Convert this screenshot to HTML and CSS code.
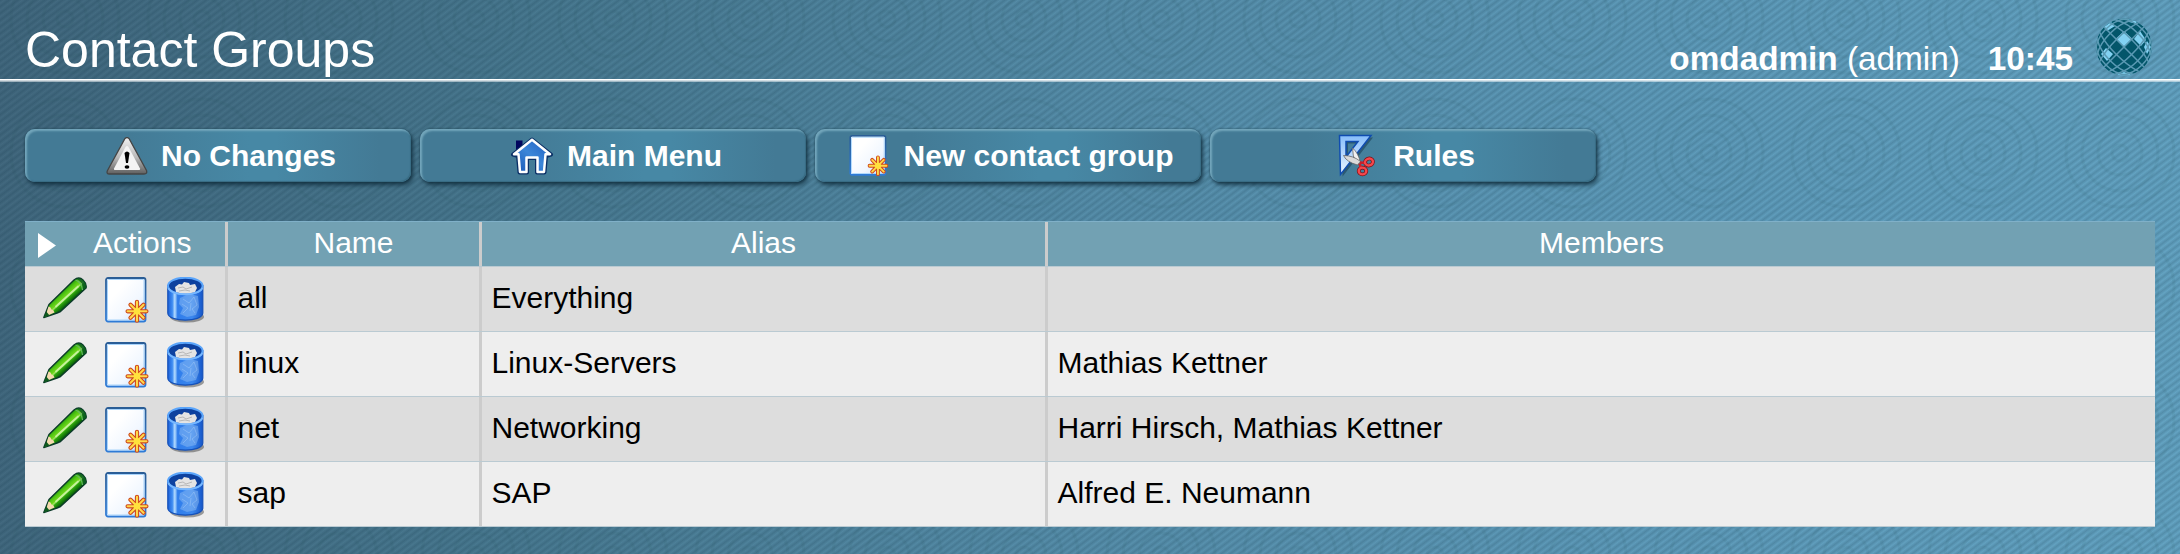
FILE: index.html
```
<!DOCTYPE html>
<html lang="en">
<head>
<meta charset="utf-8">
<title>Contact Groups</title>
<link rel="stylesheet" href="styles.css">
</head>
<body>
<svg class="defs" width="0" height="0" aria-hidden="true">
  <defs>
    <linearGradient id="sheet" x1="0" y1="0" x2="1" y2="1"><stop offset="0.3" stop-color="#fff"/><stop offset="0.65" stop-color="#f1f7ff"/><stop offset="1" stop-color="#c4dcf8"/></linearGradient>
    <linearGradient id="sheetEdge" x1="0" y1="0" x2="0" y2="1"><stop offset="0" stop-color="#2a5d96"/><stop offset="1" stop-color="#2f7bd6"/></linearGradient>
    <linearGradient id="green" gradientUnits="userSpaceOnUse" x1="16" y1="15" x2="26" y2="26"><stop offset="0" stop-color="#0f8f0a"/><stop offset="0.3" stop-color="#4fc412"/><stop offset="0.52" stop-color="#6fd61c"/><stop offset="0.6" stop-color="#a9e86a"/><stop offset="0.7" stop-color="#2fa80c"/><stop offset="1" stop-color="#065c08"/></linearGradient>
    <linearGradient id="can" x1="0" y1="0" x2="1" y2="0"><stop offset="0" stop-color="#1c5fd6"/><stop offset="0.13" stop-color="#3f8df2"/><stop offset="0.2" stop-color="#b5dcff"/><stop offset="0.28" stop-color="#2f7deb"/><stop offset="0.7" stop-color="#3c88ee"/><stop offset="1" stop-color="#1556c8"/></linearGradient>
    <linearGradient id="roof" x1="0" y1="1" x2="1" y2="0"><stop offset="0" stop-color="#1554b4"/><stop offset="0.5" stop-color="#3c86d8"/><stop offset="1" stop-color="#1e5cc0"/></linearGradient>
    <linearGradient id="steel" x1="0" y1="0" x2="0" y2="1"><stop offset="0" stop-color="#f2f2f2"/><stop offset="0.55" stop-color="#b9b9b9"/><stop offset="1" stop-color="#5f5f5f"/></linearGradient>
    <linearGradient id="ruler" x1="0" y1="0" x2="0" y2="1"><stop offset="0" stop-color="#86bdfb"/><stop offset="1" stop-color="#eef6ff"/></linearGradient>
    <clipPath id="ball"><ellipse rx="28" ry="28.5"/></clipPath>
    <pattern id="rings" width="137" height="134" patternUnits="userSpaceOnUse" x="0" y="86">
      <g fill="none" stroke="#1b4a4c" stroke-width="3"><circle cx="65" cy="67" r="8"/><circle cx="65" cy="67" r="22"/><circle cx="65" cy="67" r="38"/><circle cx="65" cy="67" r="54"/></g>
    </pattern>
    <symbol id="i-star" viewBox="0 0 24 24">
      <g stroke-linecap="round" fill="none"><path d="M12 2.600v18.800M2.600 12h18.800M5.500 5.500l13 13M18.500 5.500l-13 13" stroke="#cf4a1c" stroke-width="4.300"/><path d="M12 2.600v18.800M2.600 12h18.800M5.500 5.500l13 13M18.500 5.500l-13 13" stroke="#ffd94a" stroke-width="2.100"/></g><circle cx="12" cy="12" r="3.300" fill="#ffe23c"/>
    </symbol>
    <symbol id="i-new" viewBox="0 0 44 48">
      <rect x="1" y="1" width="39.500" height="43.500" rx="2" fill="url(#sheet)" stroke="url(#sheetEdge)" stroke-width="1.800"/>
      <rect x="2.500" y="2.500" width="36.500" height="40.500" rx="1" fill="none" stroke="#a9d4fb" stroke-width="1"/>
      <use href="#i-star" x="20" y="22.300" width="24" height="24"/>
    </symbol>
    <symbol id="i-pencil" viewBox="0 0 44 42">
      <path d="M.8 40.500 6 27.500 31 3Q36-1 40 3t3 8L17.500 34.500 14 36Z" fill="url(#green)" stroke="#0c3a2a" stroke-width="1.400" stroke-linejoin="round"/>
      <path d="M5.500 29.500Q8 30 8.500 32.500 11 33 11.500 35.500L2.500 39.500Z" fill="#f5d9b0"/>
      <path d="M.8 40.500 3.300 34.500 6.500 38.500Z" fill="#0d5a1c"/>
      <path d="M13 29.500 35 9.500" stroke="#c6f29c" stroke-width="1.800" stroke-linecap="round"/>
      <path d="M33.500 1.800Q36 0 40 3t3 8L40.500 13Q40 5 33.500 1.800Z" fill="#0b5a22" opacity=".85"/>
      <path d="M32.500 3Q38.500 5 39.500 13" stroke="#65b766" stroke-width="1.300" fill="none"/>
    </symbol>
    <symbol id="i-can" viewBox="0 0 38 46">
      <ellipse cx="20" cy="40" rx="17" ry="5.500" fill="#333" opacity=".45"/>
      <path d="M.8 8.500V36c0 9.500 35 9.500 35 0V8.500Z" fill="url(#can)" stroke="#1450b8" stroke-width="1.200"/>
      <path d="M13 21l9-4 9 2 1 11-3 8-9 2-7-3 3-6-4-4z" fill="#8bbcf4" opacity=".5"/>
      <path d="M16 22l6 4 5-6 3 8-5 4 3 4m-13-9 6 4-5 5m8-10-1 8" fill="none" stroke="#b9d9fb" stroke-width="1" opacity=".35"/>
      <ellipse cx="18.300" cy="9" rx="17.300" ry="8.300" fill="#0d419f" stroke="#5aa5fb" stroke-width="2"/>
      <path d="M8 10l4-3 3 .5L17 5l5 1 1 2 5-1 2 4-2 4Q18 18 9 15Z" fill="#e4e4e4"/>
      <path d="M11 11l5-1 3 2 6-2m-13 4 6-1 5 1" fill="none" stroke="#b8b8b8"/>
      <path d="M1.500 11C4 19.500 33 19.500 35.200 11" fill="none" stroke="#78b8ff" stroke-width="1.700"/>
    </symbol>
    <symbol id="i-warn" viewBox="0 0 42 38">
      <path d="M19 1.500q2-2 4 0l17.500 32q1 3.500-2.500 3.500H3.500Q0 37 1.500 33.500Z" fill="url(#steel)" stroke="#454545" stroke-width="1.300"/>
      <path d="M19.500 10q1.500-2 3 0L34 31.500q.5 1.500-1 1.500H9q-1.500 0-1-1.500Z" fill="#f4f4f4"/>
      <path d="M18.500 16q2.500-3 5 0l-1.500 10h-2z" fill="#000"/><ellipse cx="21" cy="30" rx="2.400" ry="1.800" fill="#000"/>
    </symbol>
    <symbol id="i-home" viewBox="0 0 44 38">
      <path d="M6 3.500h6.500V12L6 17Z" fill="#02065e"/>
      <path d="M22 2.500 41 17.500l-5 1.500-1.500 16.500H27V21H17v14.500H9.500L8 19 3 17.500Z" fill="#0a2f66" stroke="#0a2f66" stroke-width="4" stroke-linejoin="round"/>
      <path d="M22 2.800 40 17.300H35.500L34 35H27.500V20.500H16.500V35H10L8.500 17.300H4Z" fill="url(#roof)" stroke="#fff" stroke-width="2.500" stroke-linejoin="round"/>
    </symbol>
    <symbol id="i-rules" viewBox="0 0 38 44">
      <path d="M2.600 2.600H34L3.600 41.500Z M9 8.600V24L21 8.600Z" transform="translate(1 1)" fill="#12344c" opacity=".5" fill-rule="evenodd"/>
      <path d="M1.500 1.500H33L2.500 40.500Z M8 7.500V23L20 7.500Z" fill="url(#ruler)" fill-rule="evenodd" stroke="#0f4cb0" stroke-width="1.500"/>
      <path d="M14.500 14q6 5 8 15l-3.500 1q-5-8-4.500-16Z" fill="#f1f1f1" stroke="#666" stroke-width=".8"/>
      <path d="M5.500 21.500q10 0 17 6l-3 3.500q-11-3-14-9.500Z" fill="#dadada" stroke="#666" stroke-width=".8"/>
      <ellipse cx="31" cy="28" rx="4" ry="3.400" transform="rotate(-20 31 28)" fill="none" stroke="#7c0f16" stroke-width="3.800"/><ellipse cx="24.500" cy="37" rx="3.800" ry="3.400" fill="none" stroke="#7c0f16" stroke-width="3.800"/>
      <path d="m22 28.500 5.500.5M21.500 29.500l1.500 4.500" stroke="#c8202a" stroke-width="2.500"/>
      <ellipse cx="31" cy="28" rx="4" ry="3.400" transform="rotate(-20 31 28)" fill="none" stroke="#f4484c" stroke-width="2.400"/><ellipse cx="24.500" cy="37" rx="3.800" ry="3.400" fill="none" stroke="#f4484c" stroke-width="2.400"/>
    </symbol>
  </defs>
</svg>
<svg class="rings" aria-hidden="true"><rect width="100%" height="100%" fill="url(#rings)"/></svg>
<header class="top">
  <h1 class="title">Contact Groups</h1>
  <div class="session">
    <span class="user"><b>omdadmin</b> (admin)</span>
    <b class="clock">10:45</b>
    <svg class="globe" viewBox="-29 -29 58 59" aria-hidden="true">
      <g clip-path="url(#ball)">
        <ellipse rx="28" ry="28.500" fill="#03566a"/>
        <path fill="#82d1f2" d="M0-16 8-8.500 0-.5-8-8.500ZM16-16 22-7 17-1 10-8ZM23-6 27 0 23 7 20 0ZM-18 1-11 7-17 14-23 7ZM-20-20-13-25-9-21-17-16ZM3-28 12-26 13-23 5-25ZM-8 28 0 25 8 28 0 32Z"/>
        <g class="mesh" transform="rotate(45)">
          <path d="M0-30V30M-30 0H30"/>
          <ellipse rx="10.700" ry="36"/><ellipse rx="19.500" ry="34"/><ellipse rx="25.500" ry="31"/>
          <ellipse rx="36" ry="10.700"/><ellipse rx="34" ry="19.500"/><ellipse rx="31" ry="25.500"/>
        </g>
      </g>
    </svg>
  </div>
</header>
<nav class="buttons">
  <a class="button"><svg class="warn"><use href="#i-warn"/></svg>No Changes</a>
  <a class="button"><svg class="home"><use href="#i-home"/></svg>Main Menu</a>
  <a class="button"><svg class="new"><use href="#i-new"/></svg>New contact group</a>
  <a class="button"><svg class="rules"><use href="#i-rules"/></svg>Rules</a>
</nav>
<main class="table">
  <div class="row head"><div class="actions-head"><svg class="arrow" viewBox="0 0 18 25"><path d="M0 0 18 12.500 0 25Z" fill="#fff"/></svg><span>Actions</span></div><div>Name</div><div>Alias</div><div>Members</div></div>
  <div class="row odd"><div class="actions"><svg class="pencil"><use href="#i-pencil"/></svg><svg class="clone"><use href="#i-new"/></svg><svg class="can"><use href="#i-can"/></svg></div><div>all</div><div>Everything</div><div></div></div>
  <div class="row"><div class="actions"><svg class="pencil"><use href="#i-pencil"/></svg><svg class="clone"><use href="#i-new"/></svg><svg class="can"><use href="#i-can"/></svg></div><div>linux</div><div>Linux-Servers</div><div>Mathias Kettner</div></div>
  <div class="row odd"><div class="actions"><svg class="pencil"><use href="#i-pencil"/></svg><svg class="clone"><use href="#i-new"/></svg><svg class="can"><use href="#i-can"/></svg></div><div>net</div><div>Networking</div><div>Harri Hirsch, Mathias Kettner</div></div>
  <div class="row"><div class="actions"><svg class="pencil"><use href="#i-pencil"/></svg><svg class="clone"><use href="#i-new"/></svg><svg class="can"><use href="#i-can"/></svg></div><div>sap</div><div>SAP</div><div>Alfred E. Neumann</div></div>
</main>
</body>
</html>
```

FILE: styles.css
```
* { box-sizing: border-box; }

body {
  margin: 0;
  height: 554px;
  overflow: hidden;
  color: #000;
  font: 30px/34px "Liberation Sans", Arial, sans-serif;
  background:
    repeating-linear-gradient(143deg, rgba(10, 45, 65, .2) 0, rgba(10, 45, 65, .02) 2.7px, rgba(10, 45, 65, .2) 5.4px),
    linear-gradient(95deg, #43697f 0, #4a7b92 25%, #5890ac 50%, #609dbc 75%, #66a6c5 100%);
}

.defs { position: absolute; }

/* faint ring texture over the page background */
.rings {
  position: absolute;
  inset: 0;
  width: 100%;
  height: 554px;
  opacity: .06;
  z-index: -1;
}

.top {
  display: flex;
  justify-content: space-between;
  height: 82px;
  padding: 0 27px 0 25px;
  color: #fff;
  border-bottom: 3px solid #fff;
  border-image: linear-gradient(#fff 0 80px, rgba(255, 255, 255, .5) 81px) 3;
}

.title { margin: 22px 0 0; font-size: 50px; font-weight: 400; line-height: 57px; }

.session { display: flex; font-size: 33.3px; line-height: 36px; }
.user { margin-top: 41px; }
.clock { margin: 41px 22px 0 28px; }
.globe { width: 58px; height: 59px; margin-top: 18px; }
.mesh { fill: none; stroke: #5b9ab4; stroke-width: 1.5; }

.buttons { display: flex; gap: 9px; padding: 47px 25px 0; }

.button {
  display: flex;
  align-items: center;
  justify-content: center;
  width: 386px;
  height: 53px;
  padding: 1px 0 0 11px;
  color: #fff;
  font-weight: 700;
  border-radius: 10px;
  background: linear-gradient(90deg, #437a95 25%, #4788a5 58%, #4788a5 65%, #437a95 92%);
  box-shadow: inset 2px 2px 2px #73a6bb, inset -1px -1px 1px #386b82, 2px 3px 4px rgba(15, 45, 60, .85), 0 0 2px rgba(15, 45, 60, .6);
}

.warn { width: 42px; height: 38px; margin: 0 13px 0 -5px; }
.home { width: 44px; height: 38px; margin: 0 13px 0 -5px; }
.new { width: 40px; height: 43px; margin: 0 14px 0 -4px; }
.rules { width: 38px; height: 44px; margin: 0 17px 0 -4px; }

.table { margin: 39px 25px 0; border-top: 1px solid #80b0c8; }

.row {
  display: grid;
  grid-template-columns: 203px 254px 566px 1fr;
  height: 65px;
  background: #eee;
  border-bottom: 1px solid #bacad2;
}
.row.odd { background: #ddd; }
.row > div { padding: 14px 9.5px 0; border-right: 3px solid #ccc; white-space: nowrap; }
.row > div:last-child { border-right: 0; }

.row.head { height: 45px; color: #fff; text-align: center; background: #72a1b3; }
.row.head > div { padding-top: 4px; }
.row > .actions-head { display: flex; padding-left: 13px; }
.arrow { width: 18px; height: 25px; margin: 7px 37px 0 0; }

.row > .actions { display: flex; align-items: flex-start; padding: 10px 0 0 18px; }
.pencil { width: 44px; height: 42px; margin: 0 18px 0 0; }
.clone { width: 44px; height: 48px; margin-right: 18px; }
.can { width: 38px; height: 46px; }
```
